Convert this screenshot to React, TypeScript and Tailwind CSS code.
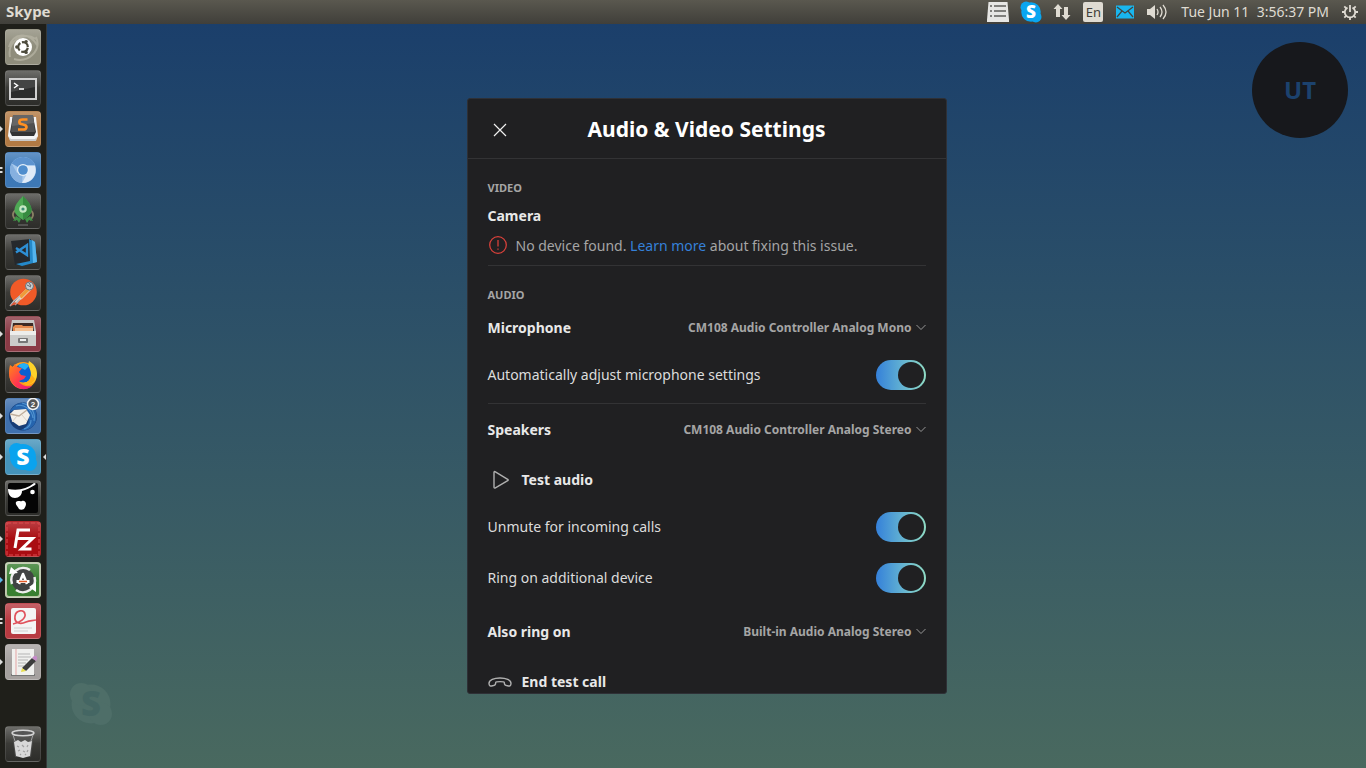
import React, { useState } from "react";

/* ---------- shared drawings ---------- */

function SkypeMark({ className, cloud, letter }: { className: string; cloud: string; letter: string }) {
  return (
    <svg viewBox="0 0 32 32" className={`overflow-visible ${className}`} aria-hidden="true">
      <g className={cloud}>
        <circle cx="16" cy="16" r="13" />
        <circle cx="9.5" cy="9.5" r="7.5" />
        <circle cx="22.5" cy="22.5" r="7.5" />
      </g>
      <text x="16" y="24" textAnchor="middle" fontSize="23" className={letter}>
        S
      </text>
    </svg>
  );
}

/* ---------- launcher artwork, all on a 36 x 36 canvas ---------- */

const UbuntuArt = (
  <>
    <path d="M5 28C2 12 18 2 31 10M31 8c6 14-8 26-22 22M4 18C8 4 24 2 32 16" fill="none" stroke="#b9b7a6" strokeWidth="2" opacity=".7" />
    <circle cx="18" cy="18" r="9" fill="#fff" />
    <circle cx="18" cy="18" r="4.8" fill="none" stroke="#4d4b3c" strokeWidth="2.2" strokeDasharray="8.4 1.65" strokeDashoffset="-.8" />
    <circle cx="11.8" cy="18" r="1.7" fill="#4d4b3c" />
    <circle cx="21.1" cy="12.6" r="1.7" fill="#4d4b3c" />
    <circle cx="21.1" cy="23.4" r="1.7" fill="#4d4b3c" />
  </>
);

const TerminalArt = (
  <>
    <rect x="4" y="8" width="28" height="22" fill="#d0d0d0" />
    <rect x="6" y="10" width="24" height="18" fill="#2b2c2c" />
    <path d="M6 10h24v7L6 22z" fill="#434444" />
    <path d="M9 13l3.5 2.500L9 18M14 19h5" fill="none" stroke="#fff" strokeWidth="1.5" />
  </>
);

const SublimeArt = (
  <>
    <path d="M5 6h26l2 19-2 4H5l-2-4z" fill="#f4f4f4" />
    <path d="M4 26l2 2h24l2-2-1 4H5z" fill="#c9c9c9" />
    <path d="M8 5h20l3 16-2 4H7l-2-4z" fill="#333" />
    <path d="M8 4h20l2 17H6z" fill="#505050" />
    <path d="M8 4h20l1 8-22 3z" fill="#666" />
    <path d="M22.500 8.500h-5c-4 0-4 4.200-1 4.600l3 .8c3 .8 2.500 4.600-1 4.600H13" fill="none" stroke="#ff9022" strokeWidth="2.600" />
  </>
);

const ChromiumArt = (
  <>
    <circle cx="18" cy="18" r="13" fill="#a8c9ec" />
    <path d="M18 18L6.7 11.5A13 13 0 0 1 30 13H18z" fill="#5d93cf" />
    <path d="M18 18l-6 3-5.3-9.5A13 13 0 0 0 17 31z" fill="#86b0df" />
    <path d="M23 20l-6 11a13 13 0 0 0 13-17h-9z" fill="#dfeaf7" />
    <circle cx="18" cy="18" r="6" fill="#e6f0fa" />
    <circle cx="18" cy="18" r="4.8" fill="#4f8dcd" />
  </>
);

const RocketArt = (
  <>
    <path d="M11 17c-5 3-3 8 0 10M25 17c5 3 3 8 0 10" fill="none" stroke="#8a8264" strokeWidth="1.800" />
    <path d="M11 23l-3 5 4-1 2 3 2-4zM25 23l3 5-4-1-2 3-2-4z" fill="#3f9447" />
    <path d="M18 3c-5 5-9 10-8.500 15 .5 3 3.500 6 8.500 9 5-3 8-6 8.500-9C27 13 23 8 18 3z" fill="#4ea955" />
    <path d="M18 3c5 5 9 10 8.500 15-.5 3-3.500 6-8.500 9z" fill="#368b40" />
    <circle cx="18" cy="16" r="3.800" fill="#c5e8c3" />
    <circle cx="18" cy="16" r="1.600" fill="#3c8d75" />
    <path d="M13 32h10" stroke="#777" />
  </>
);

const CodeArt = (
  <>
    <path d="M6 7l20-2v24L10 31z" fill="#25282c" />
    <path d="M24 5l6 3 2 20-15 4-6-2 14-3z" fill="#2489ca" />
    <path d="M27 6l3 2 2 20-4 1z" fill="#54b4ed" />
    <path d="M11 14l11 7V11L11 18.500" fill="none" stroke="#2d8fd5" strokeWidth="2.400" />
  </>
);

const PostmanArt = (
  <>
    <circle cx="18.500" cy="17" r="13.300" fill="#f05a28" />
    <path d="M8 29l6-8 9-9 3 3-9 9z" fill="#e8d6c6" />
    <path d="M14 21l9-9 2.500 2.500-9 9z" fill="#ef9b3a" />
    <path d="M5 31l4-5 6-5M15 24l-5 6" stroke="#b5bcc4" strokeWidth="1.500" />
    <path d="M5 31l4-4 3 2z" fill="#e25735" />
    <circle cx="24.500" cy="11" r="4" fill="#c7ced3" stroke="#6c747a" strokeWidth="1" />
    <path d="M22 10l4 2M24 8l2 3" stroke="#5f676d" />
  </>
);

const FilesArt = (
  <>
    <path d="M7 4h22l2 11H5z" fill="#c9c9c7" />
    <path d="M8 7h20l1 8H7z" fill="#3c2a24" />
    <path d="M8 11l2-2h7l1 1h10v6H8z" fill="#e58b4f" />
    <path d="M10 12h18v4H10z" fill="#f5c294" />
    <path d="M5 15h26v15H5z" fill="#cbcbc9" />
    <path d="M5 15h26v4H5z" fill="#ededeb" />
    <rect x="13" y="22" width="10" height="5" rx="1" fill="#777" />
    <rect x="15" y="23" width="6" height="2" fill="#eee" />
  </>
);

const FirefoxArt = (
  <>
    <defs>
      <linearGradient id="foxTail" x1="0" y1="0" x2="1" y2="1">
        <stop offset="0" stopColor="#ff8a16" />
        <stop offset=".55" stopColor="#ff3750" />
        <stop offset="1" stopColor="#e31587" />
      </linearGradient>
    </defs>
    <circle cx="18" cy="18.500" r="13.500" fill="#ff9a1a" />
    <circle cx="18.500" cy="16" r="9.500" fill="#0a5fd0" />
    <path d="M13 9c4-4 9-3 11 0l-4 4z" fill="#24b0f5" />
    <path d="M5 8c-2 8-1 15 3 19 5 6 13 7 19 2-6 1-12-1-13-5l5-2 2-3-5-1-2-3 3-4c-3 0-5-1-7-4l-2 3z" fill="url(#foxTail)" />
    <path d="M24 4c-2 5 2 8 2 13s-3 9-8 9c6 4 14 0 14-9 0-6-3-10-8-13z" fill="#ffd329" />
    <path d="M26 17c0 5-3 9-8 9 4 3 10 1 12-4z" fill="#ffae17" />
  </>
);

const ThunderbirdArt = (
  <>
    <circle cx="18" cy="18.500" r="14" fill="#173c75" />
    <path d="M5 14C8 6 17 3 25 6c7 4 9 14 4 21-3 4-9 6-13 5 7-3 9-8 7-14C20 11 12 9 5 14z" fill="#2564ae" />
    <path d="M11 8c8-3 16 4 17 12M17 5c8 2 14 9 12 18M26 22c0 5-3 8-7 9" fill="none" stroke="#4f92d0" strokeWidth="1.200" />
    <path d="M5 16l4-4 12-1 4 6-4 9-7 2-7-5z" fill="#f4f0e9" />
    <path d="M5 16l9 2 8-6" fill="none" stroke="#bfae9c" strokeWidth="1.400" />
    <path d="M7 24l5-6M17 17l5 6" fill="none" stroke="#dcd2c6" />
    <circle cx="28" cy="6" r="5.500" fill="#555" stroke="#f2f2f2" strokeWidth="1.500" />
    <text x="28" y="9" textAnchor="middle" fontSize="8" className="fill-white font-['Liberation_Sans'] font-bold">
      2
    </text>
  </>
);

const PirateArt = (
  <>
    <rect x="3" y="3" width="30" height="30" rx="2" fill="#050505" />
    <path d="M3 9c10 2 19 0 26-6 2 0 2 1 1 2-5 3-9 5-13 6 0 4-3 7-7 7-4 0-7-3-7-9z" fill="#fff" />
    <circle cx="27.500" cy="12" r="2.300" fill="#fff" />
    <path d="M11 22c2-2 4 0 6-1s4 1 4 3-1 3-2 5q-3 1.500-5 0c-1-3-4-4-3-7z" fill="#fff" />
  </>
);

const FileZillaArt = (
  <>
    <rect x="2" y="2" width="32" height="32" fill="none" stroke="#dd4a4e" strokeDasharray="4 2" />
    <path d="M10 27l3-18h12M11.500 17.500h9M17.500 17.500h10L16.500 28h10" fill="none" stroke="#fff" strokeWidth="3" />
  </>
);

const UpdaterArt = (
  <>
    <circle cx="18" cy="18" r="11.500" fill="#414343" />
    <path d="M7 22A12 12 0 0 1 25 8M29.500 15A12 12 0 0 1 11 28" fill="none" stroke="#ededed" strokeWidth="2.600" />
    <path d="M4 12l9-1-7-6zM31 20v10l-7-5z" fill="#fff" />
    <path d="M14 22l4-10 4 10" fill="none" stroke="#fff" strokeWidth="2.600" strokeLinejoin="round" />
    <path d="M11.500 19.500h13" stroke="#fff" strokeWidth="3" />
    <path d="M14 19.500h8" stroke="#e45b28" strokeWidth="1.500" />
  </>
);

const EvinceArt = (
  <>
    <rect x="6" y="5" width="25" height="26" rx="2" fill="#f4f4f4" />
    <path d="M8 21c7-1 13-6 12-10-1-5-9-4-10 2-1 7 5 9 11 6 4-2 6-1 10-2" fill="none" stroke="#e0525c" strokeWidth="1.700" />
    <path d="M9 25h18M9 28h14" stroke="#dcdcdc" strokeWidth="1.400" />
  </>
);

const EditorArt = (
  <>
    <path d="M6 30h24v2H6z" fill="#777" />
    <rect x="7" y="5" width="22" height="26" fill="#f0f0ee" />
    <path d="M11 5v26" stroke="#e5a5a5" />
    <path d="M13 10h12M13 13h13M13 16h10M13 19h8M13 22h6" stroke="#b5b5b5" />
    <path d="M17 24l10-10 4 3-10 10z" fill="#3c3c3c" />
    <path d="M17 24l-1 4 5-1z" fill="#e8dd4a" />
    <path d="M27 14l2-2c2-1 4 1 3 3l-1 2z" fill="#c68bc9" />
  </>
);

const TrashArt = (
  <>
    <path d="M7 7l3 24h16l3-24z" fill="#5a5a5a" opacity=".55" />
    <path d="M9 16l4-2 3 2 4-2 3 2 4-1-2 15-7 2-7-2z" fill="#d8d8d8" />
    <path d="M12 20l2 1M17 19l2 2M23 19l-1 2M13 25l2-1M18 25l2 1M23 24l-1 2M15 29l1-1M20 29l1-1" fill="none" stroke="#a0a0a0" strokeWidth="1.200" />
    <ellipse cx="18" cy="7" rx="11" ry="2.800" fill="#555" stroke="#d5d5d5" strokeWidth="1.500" />
    <path d="M8 9l2 6M28 9l-2 6" stroke="#a0a0a0" />
  </>
);

/* ---------- launcher ---------- */

type DockApp = {
  name: string;
  tile: string;
  art: React.ReactNode;
  windows?: 1 | 2;
  mark?: string;
  focused?: boolean;
};

const dark = "bg-linear-to-b from-[#4a4a46] to-[#2c2c29]";
const skypeLetter = "fill-white font-['Noto_Sans'] font-black";
const apps: DockApp[] = [
  { name: "Search your computer", tile: "bg-[#8f8d7c]", art: UbuntuArt },
  { name: "Terminal", tile: dark, art: TerminalArt },
  { name: "Sublime Text", tile: "bg-[#b27a44]", art: SublimeArt, windows: 1 },
  { name: "Chromium", tile: "bg-[#3d78b6]", art: ChromiumArt, windows: 2 },
  { name: "Rocket", tile: dark, art: RocketArt },
  { name: "Visual Studio Code", tile: dark, art: CodeArt },
  { name: "Postman", tile: dark, art: PostmanArt },
  { name: "Files", tile: "bg-[#8a3a45]", art: FilesArt, windows: 1 },
  { name: "Firefox", tile: dark, art: FirefoxArt },
  { name: "Thunderbird", tile: "bg-[#3f70ad]", art: ThunderbirdArt, windows: 1 },
  { name: "Skype", tile: "bg-[#4593ba]", art: null, windows: 1, focused: true },
  { name: "Pirate", tile: dark, art: PirateArt },
  { name: "FileZilla", tile: "bg-[#a90d12]", art: FileZillaArt, windows: 1 },
  {
    name: "Software Updater",
    tile: "bg-[#397f31] ring-2 ring-inset ring-[#b9c4a6]",
    art: UpdaterArt,
    windows: 1,
    mark: "fill-[#5db8e8]",
  },
  { name: "Document Viewer", tile: "bg-[#b73a41]", art: EvinceArt, windows: 2 },
  { name: "Text Editor", tile: "bg-[#a5a09f]", art: EditorArt, windows: 1 },
];

function DockButton({ app }: { app: DockApp }) {
  return (
    <div className="relative flex w-full justify-center">
      {app.windows === 1 && (
        <svg viewBox="0 0 4 8" className={`absolute top-[14px] left-0 h-2 w-1 ${app.mark ?? "fill-[#dcdcdc]"}`} aria-hidden="true">
          <path d="M0 1l3 3-3 3z" />
        </svg>
      )}
      {app.windows === 2 && (
        <svg viewBox="0 0 4 8" className="absolute top-[14px] left-0 h-2 w-1 fill-[#dcdcdc]" aria-hidden="true">
          <path d="M0 1h2l1 1-1 1H0zM0 5h2l1 1-1 1H0z" />
        </svg>
      )}
      <button type="button" aria-label={app.name} className={`relative size-9 rounded ${app.tile}`}>
        <span className="absolute inset-0 rounded border border-white/10 bg-linear-to-b from-white/20 to-transparent to-50%" />
        {app.art ? (
          <svg viewBox="0 0 36 36" className="relative size-9" aria-hidden="true">
            {app.art}
          </svg>
        ) : (
          <SkypeMark className="relative m-0.5 size-8" cloud="fill-[#0aa3ee]" letter={skypeLetter} />
        )}
      </button>
      {app.focused && (
        <svg viewBox="0 0 4 8" className="absolute top-[14px] right-0 h-2 w-1 fill-[#dcdcdc]" aria-hidden="true">
          <path d="M4 1L1 4l3 3z" />
        </svg>
      )}
    </div>
  );
}

function Dock() {
  return (
    <nav aria-label="Launcher" className="flex w-[47px] shrink-0 flex-col gap-[5px] border-r border-[#35393a] bg-[#1f1f1a] pt-[5px] pb-1.5">
      {apps.map((app) => (
        <DockButton key={app.name} app={app} />
      ))}
      <div className="mt-auto w-full">
        <DockButton app={{ name: "Trash", tile: dark, art: TrashArt }} />
      </div>
    </nav>
  );
}

/* ---------- top panel ---------- */

function Panel() {
  return (
    <header className="flex h-6 shrink-0 items-center justify-between bg-linear-to-b from-[#5a584f] to-[#403f3a] pr-[7px] pl-1.5 font-['Noto_Sans',sans-serif] text-sm text-[#dfdbd2]">
      <span className="text-[15px] font-bold">Skype</span>
      <div className="flex items-center">
        <svg viewBox="0 0 22 20" className="mr-2.5 h-5 w-[22px]" aria-hidden="true">
          <path d="M1.500 0h19L22 18v2H0v-2z" fill="#e6e6e4" />
          <path d="M3 4h2M7 4h12M3 9h2M7 9h12M3 14h2M7 14h12" stroke="#5d5d5a" strokeWidth="1.600" />
        </svg>
        <SkypeMark className="mr-2.5 size-6" cloud="fill-[#0aa6f0]" letter={skypeLetter} />
        <svg viewBox="0 0 18 16" className="mr-3 h-4 w-[18px] fill-[#dfdbd2]" aria-hidden="true">
          <path d="M5 0l4.500 5H7v8H3V5H.5zM11 3h4v8h2.500L13 16l-4.500-5H11z" />
        </svg>
        <span className="mr-3 flex size-5 items-center justify-center rounded-xs bg-[#dfdbd2] text-[13px] text-[#3f3e39]">En</span>
        <svg viewBox="0 0 20 14" className="mr-3 h-3.5 w-5" aria-hidden="true">
          <rect x="1" y="0.500" width="18" height="13" fill="#19b6ee" />
          <path d="M2 2l8 6 8-6M2 12l5-6M18 12l-5-6" fill="none" stroke="#45433d" strokeWidth="1.200" />
        </svg>
        <svg viewBox="0 0 20 16" className="mr-3.5 h-4 w-5" aria-hidden="true">
          <path d="M0 5h3l5-4v14l-5-4H0z" fill="#dfdbd2" />
          <path d="M10 5q2 3 0 6M13 3q4 5 0 10M16 1q6 7 0 14" fill="none" stroke="#dfdbd2" strokeWidth="1.300" />
        </svg>
        <time className="mr-3 whitespace-pre">Tue Jun 11  3:56:37 PM</time>
        <svg viewBox="0 0 18 18" className="size-[18px]" fill="none" stroke="#dfdbd2" strokeWidth="1.800" aria-hidden="true">
          <path d="M6.500 4.600a5.200 5.200 0 1 0 5 0" />
          <path d="M9 2v7" />
          <path d="M3.300 3.300l2 2M14.700 3.300l-2 2M1 9h3M14 9h3M3.300 14.700l2-2M14.700 14.700l-2-2M9 14v3" />
        </svg>
      </div>
    </header>
  );
}

/* ---------- settings dialog ---------- */

function SectionTitle({ children }: { children: React.ReactNode }) {
  return <h2 className="text-[11px] leading-[18px] font-bold text-[#a5a5a5]">{children}</h2>;
}

function DeviceRow({ id, label, device, height }: { id: string; label: string; device: string; height: string }) {
  return (
    <div className={`flex items-center justify-between ${height}`}>
      <label htmlFor={id} className="text-sm font-bold text-[#e8e8e8]">
        {label}
      </label>
      <div className="flex items-center gap-1 text-[#a5a5a5]">
        <select id={id} className="appearance-none bg-transparent text-right text-xs font-bold outline-none [field-sizing:content]">
          <option>{device}</option>
        </select>
        <svg viewBox="0 0 10 10" className="pointer-events-none size-2.5" fill="none" stroke="currentColor" strokeWidth="0.900" aria-hidden="true">
          <path d="M.5 2L5 6.500 9.500 2" />
        </svg>
      </div>
    </div>
  );
}

function ToggleRow({ id, label, height }: { id: string; label: string; height: string }) {
  const [on, setOn] = useState(true);
  return (
    <div className={`flex items-center justify-between ${height}`}>
      <label htmlFor={id} className="text-sm text-[#dcdcdc]">
        {label}
      </label>
      <input
        id={id}
        type="checkbox"
        checked={on}
        onChange={(e) => setOn(e.target.checked)}
        className="flex h-[30px] w-[50px] appearance-none items-center rounded-full bg-[#555] px-0.5 before:size-[26px] before:rounded-full before:bg-[#202022] checked:justify-end checked:bg-transparent checked:bg-linear-to-r checked:from-[#3580d9] checked:to-[#90dcc5]"
      />
    </div>
  );
}

function SettingsDialog() {
  return (
    <section
      role="dialog"
      aria-labelledby="settings-title"
      className="flex h-full w-full max-w-[480px] flex-col overflow-hidden rounded-[3px] border border-[#2e3036] bg-[#202022] font-['Noto_Sans',sans-serif]"
    >
      <div className="grid h-[60px] shrink-0 grid-cols-[64px_1fr_64px] items-center border-b border-[#333335] pt-0.5">
        <button type="button" aria-label="Close" className="flex size-10 items-center justify-center justify-self-center">
          <svg viewBox="0 0 14 14" className="size-3.5" stroke="#f0f0f0" strokeWidth="1.200" aria-hidden="true">
            <path d="M1 1l12 12M13 1L1 13" />
          </svg>
        </button>
        <h1 id="settings-title" className="text-center text-[21px] font-bold text-white">
          Audio &amp; Video Settings
        </h1>
      </div>

      <div className="flex-1 overflow-hidden px-5 pt-5">
        <SectionTitle>VIDEO</SectionTitle>
        <h3 className="mt-[7px] text-sm leading-6 font-bold text-[#e8e8e8]">Camera</h3>
        <div className="mt-1.5 flex h-8 items-start gap-2 border-b border-[#333335] text-sm leading-6 text-[#a5a5a5]">
          <svg viewBox="0 0 20 20" className="size-5" fill="none" stroke="#d6403a" strokeWidth="1.300" aria-hidden="true">
            <circle cx="10" cy="11" r="8.300" />
            <path d="M10 6v6.500M10 14.500v1.300" />
          </svg>
          <p>
            No device found.{" "}
            <a href="#troubleshoot" className="text-[#3580d9]">
              Learn more
            </a>{" "}
            about fixing this issue.
          </p>
        </div>

        <div className="mt-5">
          <SectionTitle>AUDIO</SectionTitle>
        </div>
        <DeviceRow id="microphone" label="Microphone" device="CM108 Audio Controller Analog Mono" height="h-12" />
        <div className="border-b border-[#333335] pb-[5px]">
          <ToggleRow id="auto-adjust" label="Automatically adjust microphone settings" height="h-[46px]" />
        </div>

        <DeviceRow id="speakers" label="Speakers" device="CM108 Audio Controller Analog Stereo" height="h-[52px]" />
        <button type="button" className="flex h-12 w-full items-center gap-2.5 text-left text-sm font-bold text-[#e8e8e8]">
          <svg viewBox="0 0 24 24" className="size-6" fill="none" stroke="#b0b0b0" strokeWidth="1.400" strokeLinejoin="round" aria-hidden="true">
            <path d="M6 4.500v14.500q0 1.600 1.400.8l12.300-7.100q1-.7 0-1.400L7.400 3.800Q6 3 6 4.500z" />
          </svg>
          Test audio
        </button>
        <ToggleRow id="unmute" label="Unmute for incoming calls" height="h-[46px]" />
        <ToggleRow id="ring-additional" label="Ring on additional device" height="h-14" />
        <DeviceRow id="also-ring" label="Also ring on" device="Built-in Audio Analog Stereo" height="h-[52px]" />
        <button type="button" className="flex h-12 w-full items-center gap-2.5 text-left text-sm font-bold text-[#e8e8e8]">
          <svg viewBox="0 0 24 24" className="size-6" fill="none" stroke="#b0b0b0" strokeWidth="1.400" strokeLinejoin="round" aria-hidden="true">
            <path d="M1 13.500C1 10 6 8 12 8s11 2 11 5.500c0 2.500-1.500 2.800-3.500 2.300-3-.6-3-1.300-3.300-3.600-.3-.8-8.100-.8-8.400 0-.3 2.300-.3 3-3.300 3.600-2 .5-3.500.2-3.500-2.300z" />
          </svg>
          End test call
        </button>
      </div>
    </section>
  );
}

export default function App() {
  return (
    <div className="flex h-screen flex-col overflow-hidden">
      <Panel />
      <div className="flex min-h-0 flex-1">
        <Dock />
        <main className="relative flex min-w-0 flex-1 justify-center bg-linear-to-b from-[#1b3f6b] to-[#49695f] py-[74px]">
          <SettingsDialog />
          <div className="absolute top-[18px] right-[18px] flex size-24 items-center justify-center rounded-full bg-[#17181c] font-['Noto_Sans',sans-serif] text-2xl font-bold text-[#1c426e]">
            UT
          </div>
          <SkypeMark
            className="absolute bottom-10 left-5 size-12"
            cloud="fill-[#4e6e68]"
            letter="fill-[#446663] font-['Noto_Sans'] font-black"
          />
        </main>
      </div>
    </div>
  );
}
